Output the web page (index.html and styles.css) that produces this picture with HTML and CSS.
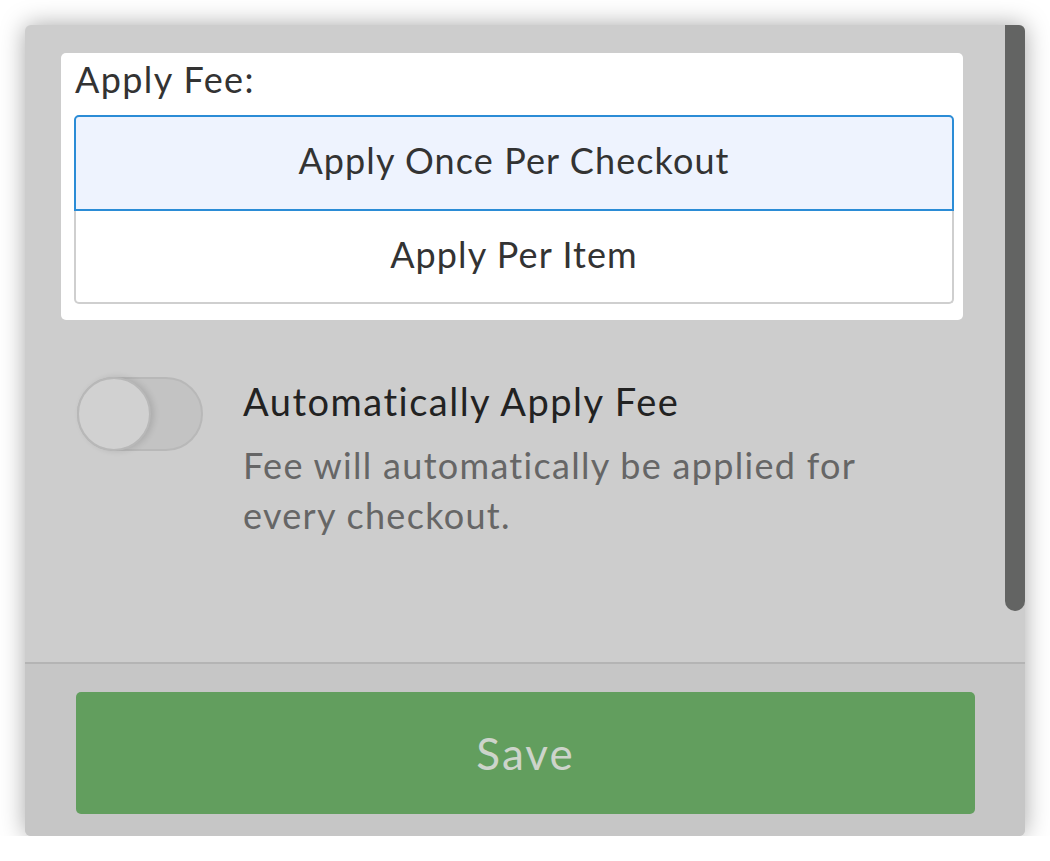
FILE: index.html
```html
<!DOCTYPE html>
<html lang="en">

<head>
    <meta charset="UTF-8">
    <meta name="viewport" content="width=device-width, initial-scale=1.0">
    <title>Fee Settings</title>
    <link rel="stylesheet" href="styles.css">
</head>

<body>
    <div class="panel">
        <div class="panel-body">
            <!-- fee type -->
            <div class="card">
                <div class="card-label">Apply Fee:</div>
                <div class="options">
                    <div class="option selected">Apply Once Per Checkout</div>
                    <div class="option">Apply Per Item</div>
                </div>
            </div>

            <!-- auto apply -->
            <div class="setting">
                <div class="toggle"><span class="knob"></span></div>
                <div class="setting-text">
                    <div class="setting-title">Automatically Apply Fee</div>
                    <div class="setting-desc">Fee will automatically be applied for every checkout.</div>
                </div>
            </div>

            <div class="scrollbar"></div>
        </div>
        <div class="panel-footer">
            <button class="save-button">Save</button>
        </div>
    </div>
</body>

</html>
```

FILE: styles.css
```css
body {
    margin: 0;
    background-color: #ffffff;
    font-family: Lato, "Open Sans", sans-serif;
}

/* 面板 */
.panel {
    margin: 25px 0 0 25px;
    width: 1000px;
    height: 811px;
    border-radius: 6px;
    background-color: #cdcdcd;
    box-shadow: 0 0 24px rgba(0, 0, 0, 0.35);
    overflow: hidden;
    display: flex;
    flex-direction: column;
}

.panel-body {
    position: relative;
    height: 639px;
    padding: 28px 0 0 36px;
    box-sizing: border-box;
    border-bottom: 2px solid #b4b4b4;
}

.scrollbar {
    position: absolute;
    top: 0;
    right: 0;
    width: 20px;
    height: 586px;
    background-color: #636463;
    border-radius: 0 0 10px 10px;
}

/* 卡片 */
.card {
    width: 902px;
    height: 267px;
    box-sizing: border-box;
    padding: 0 9px 0 13px;
    background-color: #ffffff;
    border-radius: 5px;
}

.card-label {
    padding-left: 1px;
    font-size: 36px;
    line-height: 52px;
    height: 62px;
    letter-spacing: 1.4px;
    color: #333333;
}

.options {
    color: #333333;
    font-size: 36px;
    letter-spacing: 1.1px;
}

.option {
    text-align: center;
    border: 2px solid #cfcfcf;
    border-top: none;
    border-radius: 0 0 5px 5px;
    height: 91px;
    line-height: 86px;
    background-color: #ffffff;
}

.option.selected {
    border: 2px solid #2b8cd6;
    border-radius: 5px 5px 0 0;
    background-color: #eef3fe;
    height: 92px;
}

/* 开关设置 */
.setting {
    display: flex;
    gap: 40px;
    margin-top: 57px;
    padding-left: 16px;
}

.toggle {
    position: relative;
    flex: none;
    width: 126px;
    height: 74px;
    box-sizing: border-box;
    border: 2px solid #b8b8b8;
    border-radius: 37px;
    background-color: #c3c3c3;
}

.knob {
    position: absolute;
    top: -2px;
    left: -2px;
    width: 74px;
    height: 74px;
    box-sizing: border-box;
    border: 2px solid #b8b8b8;
    border-radius: 50%;
    background-color: #d1d1d1;
    box-shadow: 3px 0 6px rgba(0, 0, 0, 0.12);
}

.setting-title {
    font-size: 38px;
    line-height: 48px;
    letter-spacing: 1.5px;
    color: #222222;
}

.setting-desc {
    margin-top: 15px;
    width: 660px;
    font-size: 36px;
    line-height: 50px;
    letter-spacing: 1.3px;
    color: #666666;
}

/* 底部 */
.panel-footer {
    flex: 1;
    padding: 28px 50px 0 51px;
    background-color: #c6c6c6;
}

.save-button {
    width: 899px;
    height: 122px;
    border: none;
    border-radius: 5px;
    background-color: #629e5e;
    color: #cdd4cb;
    font-family: Lato, "Open Sans", sans-serif;
    font-size: 44px;
    letter-spacing: 2px;
}
```
